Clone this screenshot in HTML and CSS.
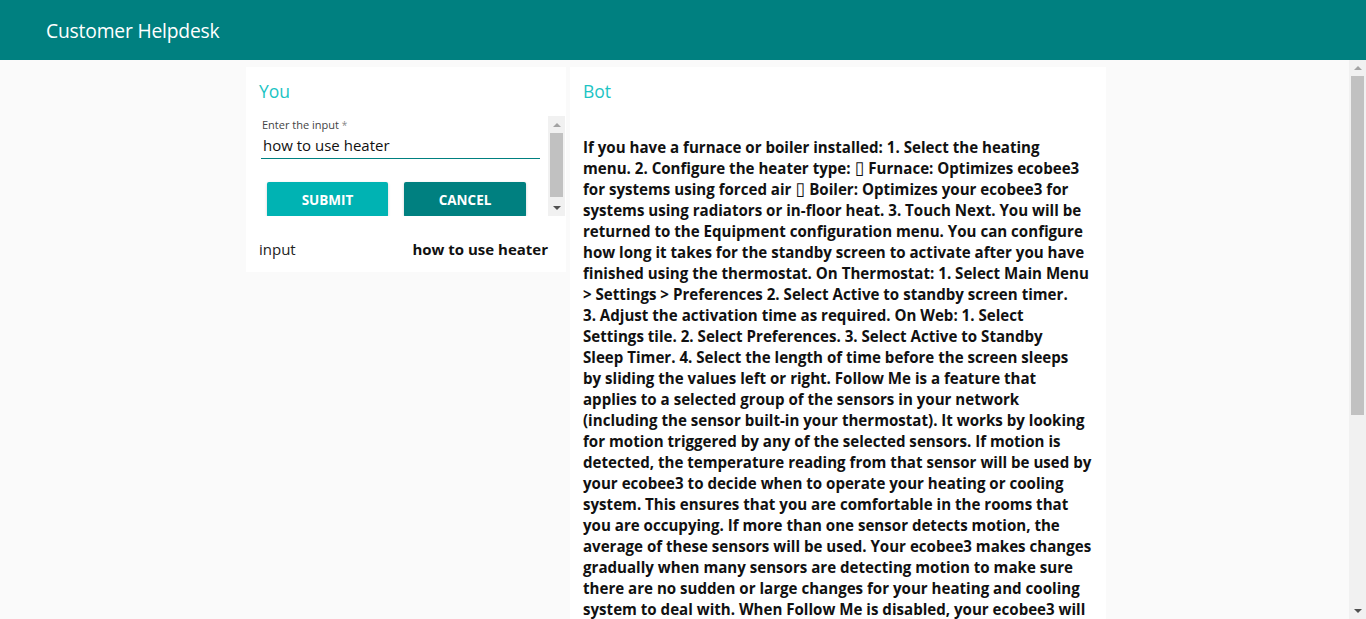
FILE: index.html
```html
<!DOCTYPE html>
<html lang="en">
<head>
<meta charset="utf-8">
<title>Customer Helpdesk</title>
<link rel="stylesheet" href="styles.css">
</head>
<body>
<header class="topbar">
  <h1 class="brand">Customer Helpdesk</h1>
</header>
<main class="main">
  <div class="scroll-area">
    <div class="columns">
      <section class="card card-you">
        <h2 class="card-title">You</h2>
        <div class="form-box">
          <div class="form-body">
            <label class="field-label">Enter the input <span class="req">*</span></label>
            <div class="field">how to use heater</div>
            <div class="actions">
              <button class="btn btn-submit">SUBMIT</button>
              <button class="btn btn-cancel">CANCEL</button>
            </div>
          </div>
          <div class="vscroll vscroll-mini">
            <div class="sb-arrow"><svg width="8" height="4" viewBox="0 0 8 4"><path d="M0 4L4 0L8 4Z" fill="#a3a3a3"/></svg></div>
            <div class="sb-thumb sb-thumb-mini"></div>
            <div class="sb-rest"></div>
            <div class="sb-arrow"><svg width="8" height="4" viewBox="0 0 8 4"><path d="M0 0L8 0L4 4Z" fill="#505050"/></svg></div>
          </div>
        </div>
        <div class="kv-row">
          <span class="kv-key">input</span>
          <span class="kv-val">how to use heater</span>
        </div>
      </section>
      <section class="card card-bot">
        <h2 class="card-title">Bot</h2>
        <p class="bot-text">If you have a furnace or boiler installed: 1. Select the heating<br>
menu. 2. Configure the heater type: <span class="tofu">&#x25AF;</span> Furnace: Optimizes ecobee3<br>
for systems using forced air <span class="tofu">&#x25AF;</span> Boiler: Optimizes your ecobee3 for<br>
systems using radiators or in-floor heat. 3. Touch Next. You will be<br>
returned to the Equipment configuration menu. You can configure<br>
how long it takes for the standby screen to activate after you have<br>
finished using the thermostat. On Thermostat: 1. Select Main Menu<br>
&gt; Settings &gt; Preferences 2. Select Active to standby screen timer.<br>
3. Adjust the activation time as required. On Web: 1. Select<br>
Settings tile. 2. Select Preferences. 3. Select Active to Standby<br>
Sleep Timer. 4. Select the length of time before the screen sleeps<br>
by sliding the values left or right. Follow Me is a feature that<br>
applies to a selected group of the sensors in your network<br>
(including the sensor built-in your thermostat). It works by looking<br>
for motion triggered by any of the selected sensors. If motion is<br>
detected, the temperature reading from that sensor will be used by<br>
your ecobee3 to decide when to operate your heating or cooling<br>
system. This ensures that you are comfortable in the rooms that<br>
you are occupying. If more than one sensor detects motion, the<br>
average of these sensors will be used. Your ecobee3 makes changes<br>
gradually when many sensors are detecting motion to make sure<br>
there are no sudden or large changes for your heating and cooling<br>
system to deal with. When Follow Me is disabled, your ecobee3 will<br>
use the average temperature of all the sensors that are part of the<br>
current Comfort Setting. To enable or disable Follow Me: On<br>
Thermostat: 1. Select Main Menu &gt; Settings &gt; Preferences. 2. Select<br>
Follow Me. 3. Touch Enabled or Disabled. On Web: 1. Select the<br>
Settings tile. 2. Select Preferences. 3. Select Follow Me and choose<br>
Enabled or Disabled. You can also choose which sensors participate<br>
in Follow Me from the sensor details screen. Smart Home/Away uses<br>
the sensors to determine whether anyone is at home. If your<br>
ecobee3 detects that you are home during a scheduled Away period,<br>
it will switch to your Home comfort setting. If no motion is detected<br>
during a scheduled Home period, it will switch to your Away comfort<br>
setting to help you save energy. Smart Home/Away can be enabled<br>
or disabled from the Preferences menu.</p>
      </section>
    </div>
  </div>
  <div class="vscroll vscroll-main">
    <div class="sb-arrow sb-arrow-main"><svg width="8" height="4" viewBox="0 0 8 4"><path d="M0 4L4 0L8 4Z" fill="#a3a3a3"/></svg></div>
    <div class="sb-thumb sb-thumb-main"></div>
    <div class="sb-rest"></div>
    <div class="sb-arrow sb-arrow-main"><svg width="8" height="4" viewBox="0 0 8 4"><path d="M0 0L8 0L4 4Z" fill="#505050"/></svg></div>
  </div>
</main>
</body>
</html>
```

FILE: styles.css
```css
* { box-sizing: border-box; }

html, body {
  margin: 0;
  height: 100%;
}

body {
  display: flex;
  flex-direction: column;
  background: #fafafa;
  font-family: "Open Sans", "Noto Sans", sans-serif;
  color: #111;
  overflow: hidden;
}

.topbar {
  flex: 0 0 60px;
  height: 60px;
  background: #008080;
  display: flex;
  align-items: center;
  padding-left: 46px;
}

.brand {
  margin: 0;
  font-size: 19.3px;
  font-weight: 400;
  color: #fff;
  letter-spacing: -0.2px;
}

.main {
  flex: 1 1 auto;
  min-height: 0;
  display: flex;
  background: #fafafa;
}

.scroll-area {
  flex: 1 1 auto;
  overflow: hidden;
}

/* scrollbar look-alike */
.vscroll {
  flex: 0 0 17px;
  width: 17px;
  background: #f1f1f1;
  display: flex;
  flex-direction: column;
}

.sb-arrow {
  flex: 0 0 17px;
  height: 17px;
  display: flex;
  align-items: center;
  justify-content: center;
}

.sb-arrow svg { display: block; }

.sb-arrow-main {
  flex-basis: 16px;
  height: 16px;
}

.sb-thumb {
  margin: 0 2px;
  background: #c1c1c1;
}

.sb-thumb-main { flex: 0 0 339px; }
.sb-thumb-mini { flex: 0 0 64px; }

.sb-rest { flex: 1 1 auto; }

.columns {
  display: flex;
  justify-content: center;
  align-items: flex-start;
  gap: 4px;
  padding: 7px 0 8px 3px;
}

.card {
  background: #fff;
}

.card-you {
  width: 320px;
  padding: 13px 0 12px 0;
}

.card-bot {
  width: 536px;
  padding: 13px 10px 16px 13px;
}

.card-title {
  margin: 0;
  font-size: 17.5px;
  line-height: 22px;
  font-weight: 400;
  color: #1cc4c4;
}

.card-you .card-title {
  margin-left: 13px;
}

.form-box {
  margin: 14px 1px 0 12px;
  height: 100px;
  display: flex;
}

.form-body {
  flex: 1 1 auto;
  overflow: hidden;
  padding: 2px 0 0 3px;
}

.field-label {
  display: block;
  font-size: 11px;
  line-height: 14px;
  color: #444;
  margin-left: 1px;
}

.req {
  color: #888;
  font-size: 10px;
}

.field {
  width: 279px;
  height: 27px;
  padding: 4px 0 0 2px;
  font-size: 15px;
  line-height: 19px;
  color: #111;
  border-bottom: 1px solid #008080;
}

.actions {
  display: flex;
  gap: 16px;
  margin: 23px 0 0 6px;
}

.btn {
  width: 121px;
  height: 35px;
  border: 0;
  border-radius: 2px;
  color: #fff;
  font-family: "Open Sans", "Noto Sans", sans-serif;
  font-weight: 700;
  font-size: 13.5px;
  box-shadow: 0 1px 3px rgba(0, 0, 0, 0.18);
  padding: 0;
}

.btn-submit { background: #00b3b3; }
.btn-cancel { background: #008080; width: 122px; }

.kv-row {
  display: flex;
  justify-content: space-between;
  align-items: baseline;
  margin-top: 22px;
  padding: 0 18px 0 13px;
  line-height: 22px;
  font-size: 15px;
}

.kv-key {
  font-weight: 400;
  color: #222;
}

.kv-val {
  font-weight: 700;
  color: #111;
}

.bot-text {
  margin: 35px 0 0;
  font-family: "Open Sans", "Noto Sans", sans-serif;
  font-weight: 700;
  font-size: 15.1px;
  line-height: 21px;
  color: #111;
  white-space: nowrap;
}

.tofu {
  font-family: "DejaVu Sans", sans-serif;
  font-weight: 400;
  font-size: 18px;
  line-height: 0;
}
```
